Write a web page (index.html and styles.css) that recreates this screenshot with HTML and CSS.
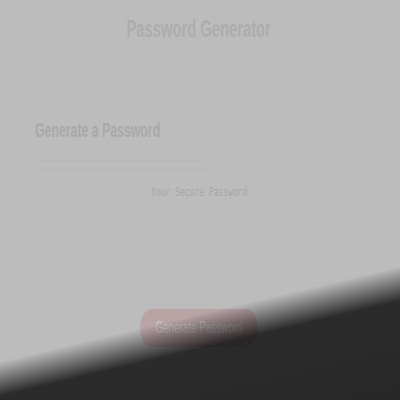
FILE: index.html
```html
<!DOCTYPE html>
<html lang="en">
<head>
<meta charset="utf-8">
<title>Password Generator</title>
<link rel="stylesheet" href="styles.css">
</head>
<body>
  <div class="viewport">
    <main class="page">
      <h1 class="title">Password Generator</h1>
      <section class="card">
        <h2 class="card-title">Generate a Password</h2>
        <div class="options">
          <div class="option-line short"></div>
          <div class="option-line long"></div>
        </div>
        <div class="output">Your Secure Password</div>
        <div class="actions">
          <button class="btn" type="button">Generate Password</button>
        </div>
      </section>
    </main>
  </div>
  <div class="shade"></div>
</body>
</html>
```
FILE: styles.css
```css
html, body {
  margin: 0;
  padding: 0;
  height: 400px;
  overflow: hidden;
  background: #bcbcbc;
}

.viewport {
  width: 100%;
  height: 400px;
  overflow: hidden;
}

.page {
  width: 646px;
  transform: scaleX(0.615);
  transform-origin: 0 0;
  font-family: "Liberation Sans", Arial, sans-serif;
}

.title {
  margin: 15px 0 0;
  font-size: 24px;
  line-height: 28px;
  font-weight: bold;
  text-align: center;
  color: #adadad;
}

.card {
  margin: 75px 0 0 57px;
  width: 533px;
}

.card-title {
  margin: 0;
  font-size: 20px;
  line-height: 24px;
  font-weight: bold;
  color: #a9a9a9;
}

.options {
  display: flex;
  flex-direction: column;
  gap: 8px;
  margin-top: 18px;
}

.option-line {
  height: 1px;
  background: #b7b7b7;
}
.option-line.short { width: 277px; }
.option-line.long { width: 289px; }

.output {
  height: 114px;
  border-left: 1px solid #b8b8b8;
  border-bottom: 1px solid #b8b8b8;
  padding-top: 14px;
  box-sizing: border-box;
  text-align: center;
  font-family: "DejaVu Sans Mono", monospace;
  font-size: 13px;
  line-height: 16px;
  color: #a7a7a7;
}

.actions {
  display: flex;
  justify-content: center;
  margin-top: 25px;
}

.btn {
  border: none;
  border-radius: 20px;
  padding: 10px 25px;
  background: #b9a3a5;
  color: #c6c6c6;
  font-family: "Liberation Sans", Arial, sans-serif;
  font-size: 16px;
  line-height: 18px;
}

.shade {
  position: fixed;
  inset: 0;
  pointer-events: none;
  mix-blend-mode: multiply;
  background: linear-gradient(166.6deg, #ffffff 73%, #3a3a3a 80%, #353535 100%);
}
```
